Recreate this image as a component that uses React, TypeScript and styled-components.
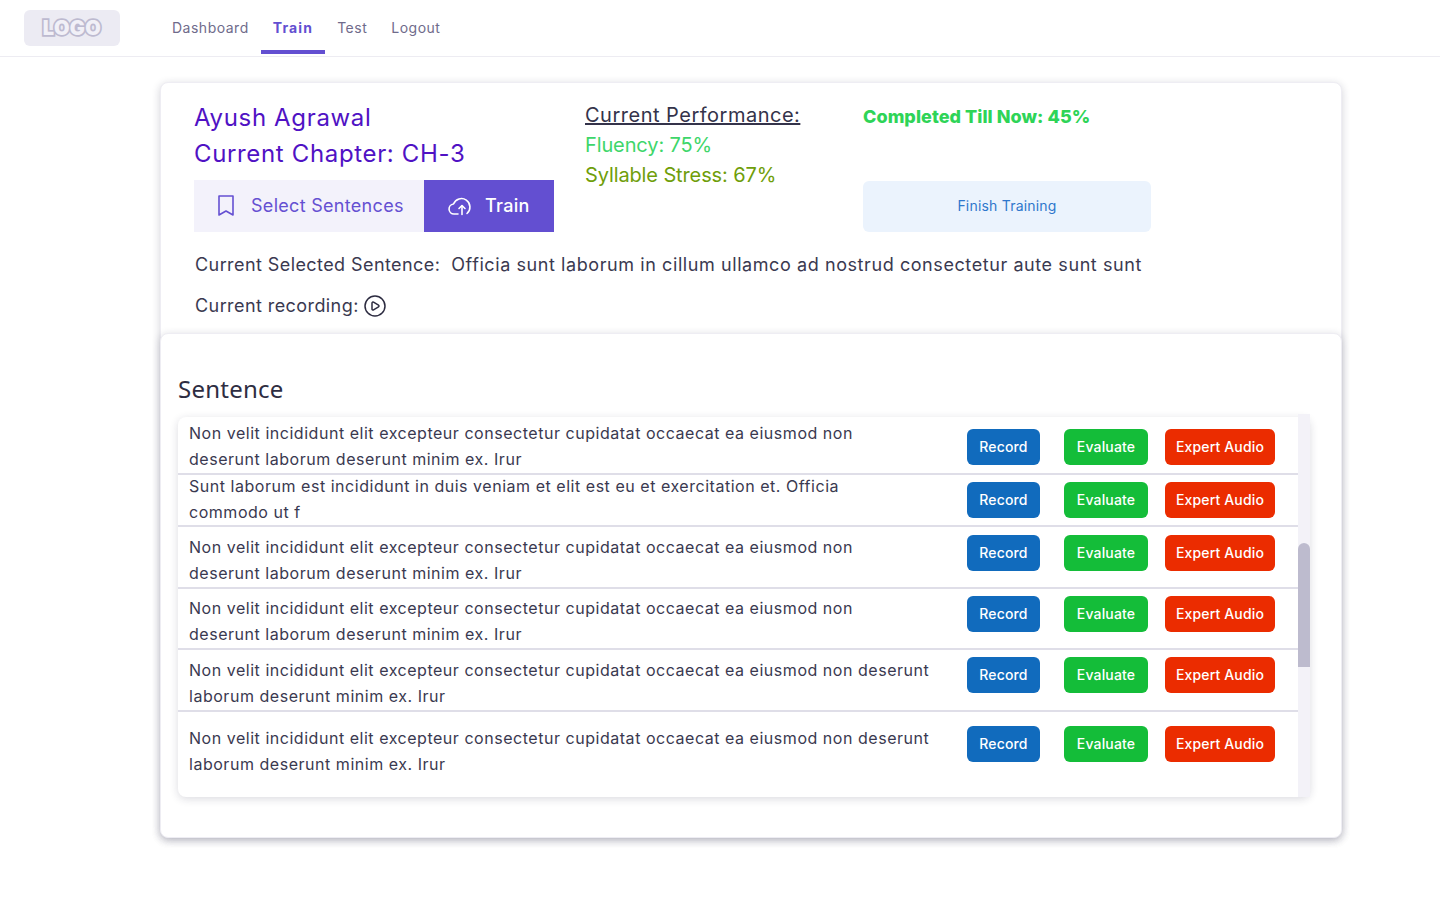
import styled, { createGlobalStyle } from 'styled-components';
import { CirclePlay } from 'lucide-react';

const GlobalStyle = createGlobalStyle`
    html, body {
        margin: 0;
        padding: 0;
        background: #fff;
        font-family: Inter, "Open Sans", sans-serif;
        color: #3a3950;
    }
`;

const Header = styled.header`
    display: flex;
    align-items: stretch;
    height: 56px;
    padding-left: 24px;
    border-bottom: 1px solid #edecf2;
`;

const LogoBox = styled.div`
    display: flex;
    align-items: center;
    justify-content: center;
    width: 96px;
    height: 36px;
    margin-top: 10px;
    margin-right: 40px;
    border-radius: 6px;
    background: #ecebf3;
`;

const LogoText = styled.span`
    font-family: Inter, sans-serif;
    font-size: 20px;
    font-weight: 900;
    letter-spacing: 0.4px;
    color: #f1f0f7;
    -webkit-text-stroke: 3.5px #bdbad0;
    paint-order: stroke fill;
`;

const Tab = styled.a<{ $active?: boolean }>`
    display: flex;
    align-items: center;
    height: 54px;
    box-sizing: border-box;
    padding: 4px 12px 0;
    font-size: 14px;
    letter-spacing: ${p => (p.$active ? '1.15px' : '0.5px')};
    font-weight: ${p => (p.$active ? 700 : 400)};
    color: ${p => (p.$active ? '#634fd1' : '#6f6b8b')};
    border-bottom: 4px solid ${p => (p.$active ? '#634fd1' : 'transparent')};
`;

const Main = styled.main`
    width: 1182px;
    margin: 25px 0 60px 160px;
`;

const Card = styled.section`
    border: 1px solid #eeedf3;
    border-radius: 8px;
    background: #fff;
    box-shadow: 0 2px 8px rgba(30, 30, 60, 0.2);
`;

const Summary = styled.div`
    box-sizing: border-box;
    height: 250px;
    padding: 17px 0 0 33px;
`;

const SummaryGrid = styled.div`
    display: grid;
    grid-template-columns: 391px 278px 288px;
`;

const NameLine = styled.div`
    font-size: 24px;
    line-height: 36px;
    letter-spacing: 0.65px;
    color: #5012c4;
    white-space: nowrap;
`;

const ButtonRow = styled.div`
    display: flex;
    margin-top: 8px;
`;

const ModeButton = styled.button<{ $active?: boolean }>`
    display: flex;
    align-items: center;
    height: 52px;
    width: ${p => (p.$active ? '130px' : '230px')};
    padding: 0 0 1px 24px;
    gap: ${p => (p.$active ? '12px' : '17px')};
    border: none;
    font-family: inherit;
    font-size: 18px;
    font-weight: ${p => (p.$active ? 500 : 400)};
    letter-spacing: 0.3px;
    white-space: nowrap;
    color: ${p => (p.$active ? '#fff' : '#6550d2')};
    background: ${p => (p.$active ? '#634fd1' : '#f3f2fb')};
`;

const PerfTitle = styled.div`
    font-size: 20px;
    line-height: 30px;
    letter-spacing: 0.5px;
    text-decoration: underline;
    color: #34334a;
`;

const PerfLine = styled.div<{ $color: string }>`
    font-size: 20px;
    line-height: 30px;
    letter-spacing: -0.12px;
    color: ${p => p.$color};
`;

const Completed = styled.div`
    font-size: 18px;
    line-height: 34px;
    font-weight: 800;
    letter-spacing: 0.05px;
    color: #2ed457;
    white-space: nowrap;
`;

const FinishButton = styled.button`
    display: block;
    width: 288px;
    height: 51px;
    margin-top: 47px;
    padding: 0 0 2px;
    border: none;
    border-radius: 6px;
    font-family: inherit;
    font-size: 14px;
    letter-spacing: 0.2px;
    color: #2f77cc;
    background: #ebf3fd;
`;

const InfoLine = styled.div<{ $top: number }>`
    display: flex;
    align-items: center;
    margin: ${p => p.$top}px 0 0 1px;
    font-size: 18px;
    line-height: 28px;
    letter-spacing: 0.42px;
    white-space: nowrap;
    color: #3a3950;
`;

const SelectedText = styled.span`
    margin-left: 11px;
    letter-spacing: 0.58px;
`;

const PlayIcon = styled(CirclePlay)`
    margin-left: 4px;
    color: #2c2b40;
`;

const SentencePanel = styled(Card)`
    margin: 0 -1px -1px;
    padding: 28px 31px 40px 17px;
`;

const PanelTitle = styled.h2`
    margin: 0 0 11px;
    font-family: "Noto Sans", sans-serif;
    font-size: 24px;
    line-height: 54px;
    font-weight: 400;
    letter-spacing: 0.25px;
    height: 44px;
    color: #2e2d42;
`;

const ListFrame = styled.div`
    display: flex;
    border-radius: 8px;
    box-shadow: 0 2px 8px rgba(30, 30, 60, 0.16);
`;

const Rows = styled.div`
    flex: 1;
    min-width: 0;
`;

const Row = styled.div<{ $height: number; $last?: boolean }>`
    display: flex;
    align-items: flex-start;
    height: ${p => p.$height}px;
    padding-left: 11px;
    border-bottom: ${p => (p.$last ? 'none' : '2px solid #dfdee8')};
`;

const RowText = styled.div<{ $wide: boolean; $top: number }>`
    width: ${p => (p.$wide ? 760 : 700)}px;
    margin-top: ${p => p.$top}px;
    font-size: 16px;
    line-height: 26px;
    letter-spacing: 0.53px;
    color: #3a3950;
`;

const Actions = styled.div<{ $top: number }>`
    display: flex;
    margin-left: auto;
    margin-right: 23px;
    margin-top: ${p => p.$top}px;
`;

const ActionButton = styled.button<{ $color: string; $width: number; $left: number }>`
    flex: none;
    width: ${p => p.$width}px;
    height: 36px;
    margin-left: ${p => p.$left}px;
    border: none;
    border-radius: 6px;
    padding: 0 0 2px;
    font-family: inherit;
    font-size: 14px;
    font-weight: 500;
    letter-spacing: 0.15px;
    color: #fff;
    background: ${p => p.$color};
`;

const Track = styled.div`
    flex: none;
    width: 12px;
    margin-top: -3px;
    background: #f3f2f8;
`;

const Thumb = styled.div`
    height: 124px;
    margin-top: 129px;
    border-radius: 6px 6px 0 0;
    background: #bdbbce;
`;

const navItems = ['Dashboard', 'Train', 'Test', 'Logout'];

const shortText = 'Non velit incididunt elit excepteur consectetur cupidatat occaecat ea eiusmod non deserunt laborum deserunt minim ex. Irur';
const otherText = 'Sunt laborum est incididunt in duis veniam et elit est eu et exercitation et. Officia commodo ut f';

const rows = [
    { text: shortText, height: 56, textTop: 3, buttonTop: 12, wide: false },
    { text: otherText, height: 50, textTop: -2, buttonTop: 7, wide: false },
    { text: shortText, height: 60, textTop: 7, buttonTop: 8, wide: false },
    { text: shortText, height: 59, textTop: 6, buttonTop: 7, wide: false },
    { text: shortText, height: 60, textTop: 7, buttonTop: 7, wide: true },
    { text: shortText, height: 85, textTop: 13, buttonTop: 14, wide: true },
];

function BookmarkIcon() {
    return (
        <svg width="16" height="21" viewBox="0 0 16 21" fill="none" stroke="currentColor" strokeWidth="1.6" strokeLinejoin="round">
            <path d="M1 1h14v19l-7-4-7 4z" />
        </svg>
    );
}

function CloudIcon() {
    return (
        <svg width="25" height="24" viewBox="0 0 25 24" fill="none" stroke="currentColor" strokeWidth="1.6" strokeLinecap="round" strokeLinejoin="round">
            <path d="M10 20H6a5 5 0 0 1-.5-9.97A8.5 8.5 0 1 1 19 19.5" />
            <path d="M14 20.5V12" />
            <path d="M11 14.5l3-3 3 3" />
        </svg>
    );
}

function App() {
    return (
        <>
            <GlobalStyle />
            <Header>
                <LogoBox>
                    <LogoText>LOGO</LogoText>
                </LogoBox>
                {navItems.map(item => (
                    <Tab key={item} $active={item === 'Train'}>{item}</Tab>
                ))}
            </Header>
            <Main>
                <Card>
                    <Summary>
                        <SummaryGrid>
                            <div>
                                <NameLine>Ayush Agrawal</NameLine>
                                <NameLine>Current Chapter: CH-3</NameLine>
                                <ButtonRow>
                                    <ModeButton><BookmarkIcon />Select Sentences</ModeButton>
                                    <ModeButton $active><CloudIcon />Train</ModeButton>
                                </ButtonRow>
                            </div>
                            <div>
                                <PerfTitle>Current Performance:</PerfTitle>
                                <PerfLine $color="#3ed66a">Fluency: 75%</PerfLine>
                                <PerfLine $color="#6f9e0a">Syllable Stress: 67%</PerfLine>
                            </div>
                            <div>
                                <Completed>Completed Till Now: 45%</Completed>
                                <FinishButton>Finish Training</FinishButton>
                            </div>
                        </SummaryGrid>
                        <InfoLine $top={19}>
                            Current Selected Sentence:
                            <SelectedText>Officia sunt laborum in cillum ullamco ad nostrud consectetur aute sunt sunt</SelectedText>
                        </InfoLine>
                        <InfoLine $top={13}>
                            Current recording:
                            <PlayIcon size={24} strokeWidth={1.5} />
                        </InfoLine>
                    </Summary>
                    <SentencePanel>
                        <PanelTitle>Sentence</PanelTitle>
                        <ListFrame>
                            <Rows>
                                {rows.map((row, i) => (
                                    <Row key={i} $height={row.height} $last={i === rows.length - 1}>
                                        <RowText $wide={row.wide} $top={row.textTop}>{row.text}</RowText>
                                        <Actions $top={row.buttonTop}>
                                            <ActionButton $color="#116bbd" $width={73} $left={0}>Record</ActionButton>
                                            <ActionButton $color="#14bd39" $width={84} $left={24}>Evaluate</ActionButton>
                                            <ActionButton $color="#eb2c00" $width={110} $left={17}>Expert Audio</ActionButton>
                                        </Actions>
                                    </Row>
                                ))}
                            </Rows>
                            <Track>
                                <Thumb />
                            </Track>
                        </ListFrame>
                    </SentencePanel>
                </Card>
            </Main>
        </>
    );
}

export default App;
